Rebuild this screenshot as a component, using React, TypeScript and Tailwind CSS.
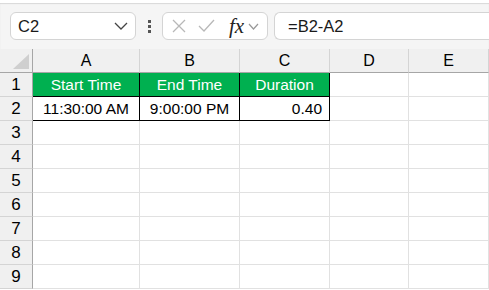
import { ChevronDown } from "lucide-react";

const cols = ["A", "B", "C", "D", "E"];
const rows = [1, 2, 3, 4, 5, 6, 7, 8, 9];

const font = { fontFamily: '"Liberation Sans", Arial, sans-serif' };

function Cell({ r, c }: { r: number; c: number }) {
    const inTable = r <= 2 && c <= 2;
    const base = "h-6 border-b border-r flex items-center px-1 text-[15.5px] text-black";
    if (!inTable) return <div className={`${base} border-[#e1e1e1]`} />;
    if (r === 1) {
        const label = ["Start Time", "End Time", "Duration"][c];
        return <div className={`${base} border-black bg-[#00b050] text-white justify-center`}>{label}</div>;
    }
    const val = ["11:30:00 AM", "9:00:00 PM", "0.40"][c];
    return (
        <div className={`${base} border-black ${c === 2 ? "justify-end pr-[7px]" : "justify-center"}`}>{val}</div>
    );
}

function Row({ r }: { r: number }) {
    return (
        <>
            <div className="h-6 bg-[#f0f0f0] border-b border-r border-b-[#d4d4d4] border-r-[#a6a6a6] flex items-center justify-center text-[17px] text-black">
                {r}
            </div>
            {cols.map((_, c) => (
                <Cell key={c} r={r} c={c} />
            ))}
        </>
    );
}

export default function App() {
    return (
        <div className="w-[489px] h-[290px] overflow-hidden bg-white" style={font}>
            {/* formula bar */}
            <div className="h-[49px] bg-[#f5f5f5] border-t-[3px] border-white shadow-[inset_0_1px_1px_rgba(0,0,0,0.12)] flex items-start pt-[9px] pl-[10px]">
                <div className="w-[126px] h-[28px] bg-white border border-[#d4d4d4] rounded-md flex items-center justify-between pl-[7px] pr-[7px]">
                    <span className="text-[16.5px] text-[#1a1a1a]">C2</span>
                    <svg width="14" height="8" viewBox="0 0 14 8">
                        <path d="M1 1 L7 7 L13 1" stroke="#444" strokeWidth="1.3" fill="none" />
                    </svg>
                </div>
                <div className="w-[26px] h-[28px] flex flex-col items-center justify-center gap-[2px]">
                    <span className="w-[3px] h-[3px] bg-[#555]" />
                    <span className="w-[3px] h-[3px] bg-[#555]" />
                    <span className="w-[3px] h-[3px] bg-[#555]" />
                </div>
                <div className="w-[106px] h-[28px] bg-white border border-[#d4d4d4] rounded-md flex items-center pl-[8px]">
                    <svg width="16" height="16" viewBox="0 0 16 16" className="mr-[11px]">
                        <path d="M2 2 L14 14 M14 2 L2 14" stroke="#b8b8b8" strokeWidth="1.3" fill="none" />
                    </svg>
                    <svg width="17" height="14" viewBox="0 0 17 14" className="mr-[14px]">
                        <path d="M1 7 L6 12 L16 1" stroke="#b8b8b8" strokeWidth="1.3" fill="none" />
                    </svg>
                    <span className="text-[21px] italic text-[#222] leading-none" style={{ fontFamily: '"Liberation Serif", serif' }}>
                        fx
                    </span>
                    <svg width="11" height="7" viewBox="0 0 11 7" className="ml-[4px]">
                        <path d="M1 1 L5.5 6 L10 1" stroke="#999" strokeWidth="1.2" fill="none" />
                    </svg>
                </div>
                <div className="w-[6px]" />
                <div className="flex-1 h-[28px] bg-white border border-r-0 border-[#d4d4d4] rounded-l-md flex items-center pl-[13px]">
                    <span className="text-[16.5px] text-[#1a1a1a]">=B2-A2</span>
                </div>
            </div>

            {/* grid */}
            <div className="grid grid-cols-[33px_107px_100px_90px_79px_1fr]">
                <div className="h-6 bg-[#f0f0f0] border-b border-r border-[#a6a6a6] relative">
                    <svg width="16" height="15" viewBox="0 0 16 15" className="absolute right-[3px] bottom-[3px]">
                        <path d="M16 0 L16 15 L0 15 Z" fill="#cfcfcf" />
                    </svg>
                </div>
                {cols.map((c) => (
                    <div
                        key={c}
                        className="h-6 bg-[#f0f0f0] border-b border-r border-b-[#a6a6a6] border-r-[#d4d4d4] flex items-center justify-center text-[16px] text-black"
                    >
                        {c}
                    </div>
                ))}
                {rows.map((r) => (
                    <Row key={r} r={r} />
                ))}
            </div>
        </div>
    );
}
